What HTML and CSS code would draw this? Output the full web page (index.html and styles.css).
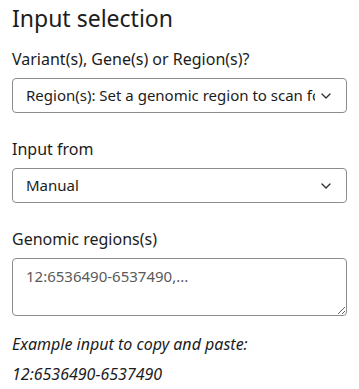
FILE: index.html
```html
<!DOCTYPE html>
<html lang="en">
<head>
    <meta charset="UTF-8">
    <meta name="viewport" content="width=device-width, initial-scale=1.0">
    <title>Input selection</title>
    <link rel="stylesheet" href="styles.css">
</head>
<body>
    <main class="panel">
        <h2 class="title">Input selection</h2>

        <div class="field">
            <label class="label" for="input-type">Variant(s), Gene(s) or Region(s)?</label>
            <div class="select-wrap">
                <select class="select" id="input-type">
                    <option>Region(s): Set a genomic region to scan for variants</option>
                    <option>Variant(s)</option>
                    <option>Gene(s)</option>
                </select>
                <svg class="chevron" width="10" height="6" viewBox="0 0 10 6">
                    <path d="M1 1l4 4 4-4" fill="none" stroke="#333" stroke-width="1.4" stroke-linecap="round" stroke-linejoin="round"/>
                </svg>
            </div>
        </div>

        <div class="field">
            <label class="label" for="input-from">Input from</label>
            <div class="select-wrap">
                <select class="select" id="input-from">
                    <option>Manual</option>
                    <option>File</option>
                </select>
                <svg class="chevron" width="10" height="6" viewBox="0 0 10 6">
                    <path d="M1 1l4 4 4-4" fill="none" stroke="#333" stroke-width="1.4" stroke-linecap="round" stroke-linejoin="round"/>
                </svg>
            </div>
        </div>

        <div class="field field-last">
            <label class="label" for="regions">Genomic regions(s)</label>
            <textarea class="textarea" id="regions" placeholder="12:6536490-6537490,..."></textarea>
        </div>

        <p class="example">Example input to copy and paste:<br>12:6536490-6537490</p>
    </main>
</body>
</html>
```

FILE: styles.css
```css
* {
    box-sizing: border-box;
    margin: 0;
    padding: 0;
}

body {
    font-family: 'Noto Sans', 'Open Sans', sans-serif;
    font-size: 16px;
    line-height: 1.5;
    color: #1c1c1c;
    background-color: #fff;
}

.panel {
    padding: 5px 12px 0 12px;
}

.title {
    font-size: 23px;
    font-weight: 400;
    line-height: 1.2;
    margin-bottom: 14px;
}

.field {
    display: flex;
    flex-direction: column;
    gap: 7px;
    margin-bottom: 24px;
}

.field-last {
    margin-bottom: 13px;
}

.select-wrap {
    position: relative;
}

.select {
    appearance: none;
    -webkit-appearance: none;
    width: 100%;
    height: 35px;
    padding: 0 31px 0 13px;
    font-family: inherit;
    font-size: 15px;
    color: #1c1c1c;
    background-color: #fff;
    border: 1px solid #8c8c8c;
    border-radius: 4px;
}

.chevron {
    position: absolute;
    right: 16px;
    top: 15px;
    pointer-events: none;
}

.textarea {
    width: 100%;
    height: 58px;
    padding: 6px 13px;
    font-family: inherit;
    font-size: 15px;
    line-height: 1.5;
    color: #1c1c1c;
    border: 1px solid #8c8c8c;
    border-radius: 4px;
    resize: vertical;
}

.textarea::placeholder {
    color: #5a5a5a;
}

.example {
    font-style: italic;
    line-height: 1.9;
}
```
